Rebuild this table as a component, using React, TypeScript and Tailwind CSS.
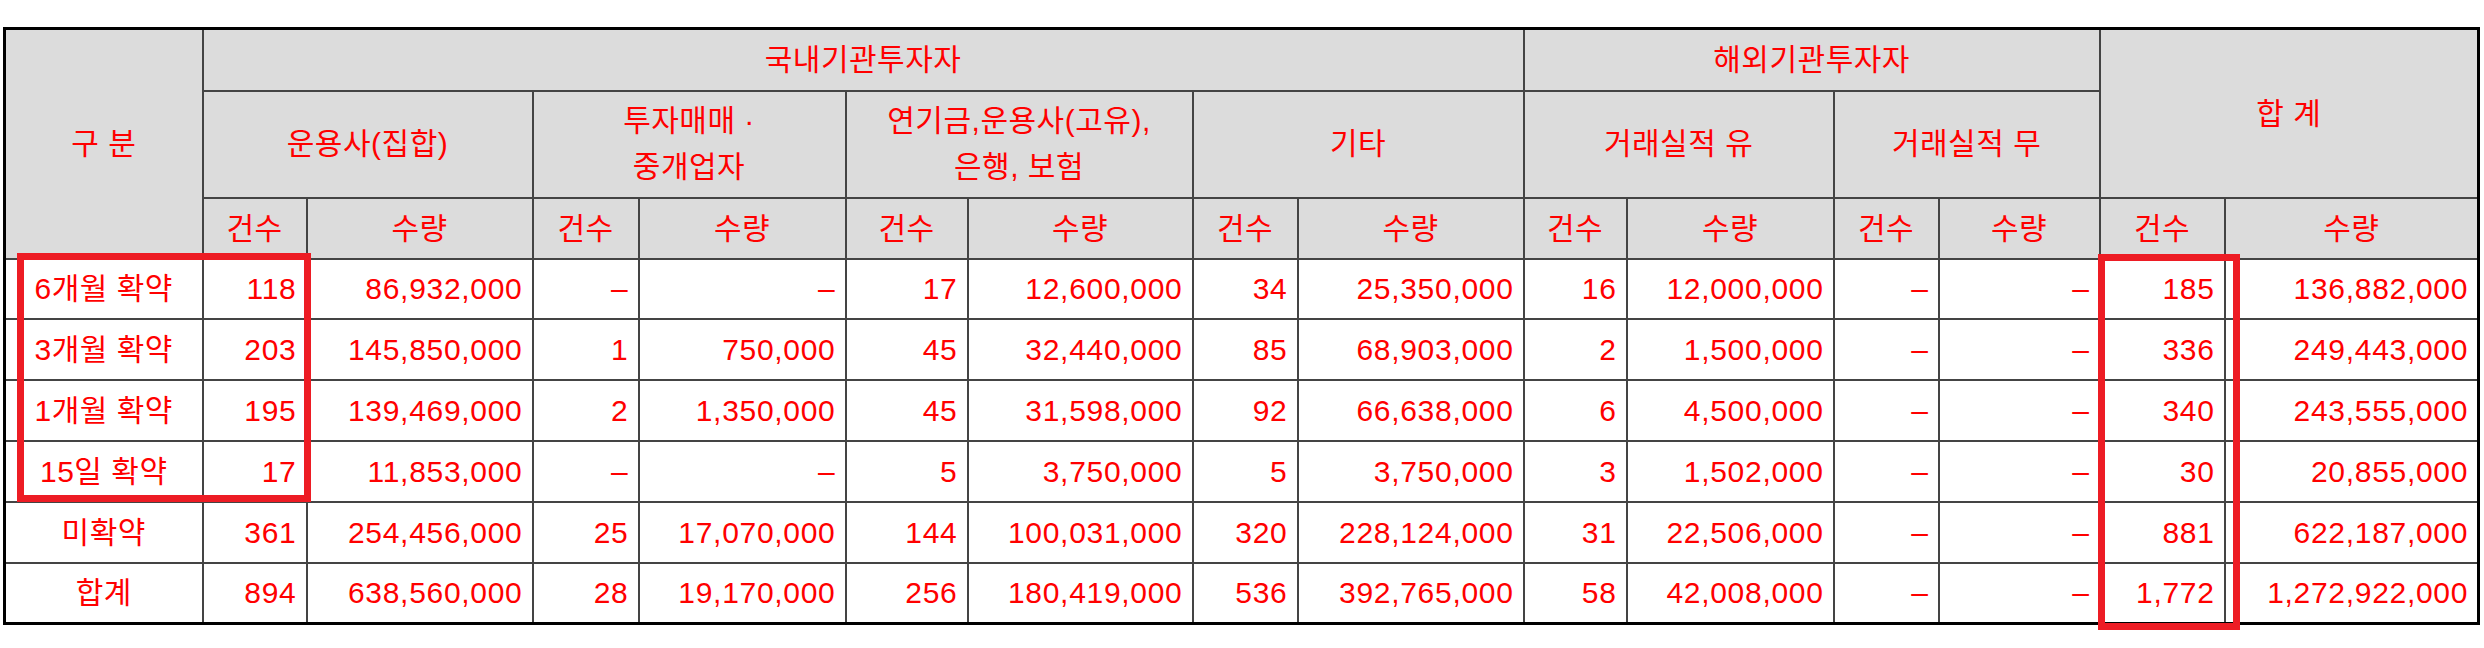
const rows = [
  ["6개월 확약", "118", "86,932,000", "–", "–", "17", "12,600,000", "34", "25,350,000", "16", "12,000,000", "–", "–", "185", "136,882,000"],
  ["3개월 확약", "203", "145,850,000", "1", "750,000", "45", "32,440,000", "85", "68,903,000", "2", "1,500,000", "–", "–", "336", "249,443,000"],
  ["1개월 확약", "195", "139,469,000", "2", "1,350,000", "45", "31,598,000", "92", "66,638,000", "6", "4,500,000", "–", "–", "340", "243,555,000"],
  ["15일 확약", "17", "11,853,000", "–", "–", "5", "3,750,000", "5", "3,750,000", "3", "1,502,000", "–", "–", "30", "20,855,000"],
  ["미확약", "361", "254,456,000", "25", "17,070,000", "144", "100,031,000", "320", "228,124,000", "31", "22,506,000", "–", "–", "881", "622,187,000"],
  ["합계", "894", "638,560,000", "28", "19,170,000", "256", "180,419,000", "536", "392,765,000", "58", "42,008,000", "–", "–", "1,772", "1,272,922,000"],
]

const colWidths = [198, 104, 226, 106, 207, 122, 225, 105, 226, 103, 207, 105, 161, 125, 254]

const groups = [
  { label: "운용사(집합)" },
  { label: "투자매매 ·", second: "중개업자" },
  { label: "연기금,운용사(고유),", second: "은행, 보험" },
  { label: "기타" },
  { label: "거래실적 유" },
  { label: "거래실적 무" },
]

const head = "border-2 border-[#444] bg-[#dcdcdc] text-center align-middle font-normal tracking-[0.5px]"
const cell = "border-2 border-[#444] bg-white align-middle"

export default function App() {
  return (
    <div
      className="relative w-[2484px] h-[648px] bg-white pt-[27px] pl-[3px] text-[#ff0000] text-[30px]"
      style={{ fontFamily: '"Liberation Sans", "Noto Sans CJK KR", sans-serif' }}
    >
      <table className="table-fixed border-collapse border-[3px] border-black w-[2474px]">
        <colgroup>
          {colWidths.map((w, i) => (
            <col key={i} style={{ width: w }} />
          ))}
        </colgroup>
        <thead>
          <tr className="h-[62px]">
            <th rowSpan={3} className={head}>
              구 분
            </th>
            <th colSpan={8} className={head}>
              국내기관투자자
            </th>
            <th colSpan={4} className={head}>
              해외기관투자자
            </th>
            <th colSpan={2} rowSpan={2} className={head}>
              합 계
            </th>
          </tr>
          <tr className="h-[107px]">
            {groups.map((g, i) => (
              <th key={i} colSpan={2} className={`${head} leading-[46px]`}>
                {g.label}
                {g.second && (
                  <>
                    <br />
                    {g.second}
                  </>
                )}
              </th>
            ))}
          </tr>
          <tr className="h-[61px]">
            {Array.from({ length: 7 }).flatMap((_, i) => [
              <th key={`a${i}`} className={head}>
                건수
              </th>,
              <th key={`b${i}`} className={head}>
                수량
              </th>,
            ])}
          </tr>
        </thead>
        <tbody>
          {rows.map((r, ri) => (
            <tr key={ri} className={ri === 0 ? "h-[60px]" : "h-[61px]"}>
              {r.map((v, ci) =>
                ci === 0 ? (
                  <td key={ci} className={`${cell} text-center tracking-[0.5px]`}>
                    {v}
                  </td>
                ) : (
                  <td key={ci} className={`${cell} text-right pr-[9px] tracking-[0.7px]`}>
                    {v}
                  </td>
                )
              )}
            </tr>
          ))}
        </tbody>
      </table>

      {/* highlight boxes */}
      <div className="absolute left-[17px] top-[253px] w-[294px] h-[249px] border-[7px] border-[#ed1c24]" />
      <div className="absolute left-[2098px] top-[254px] w-[142px] h-[376px] border-[7px] border-[#ed1c24]" />
    </div>
  )
}
